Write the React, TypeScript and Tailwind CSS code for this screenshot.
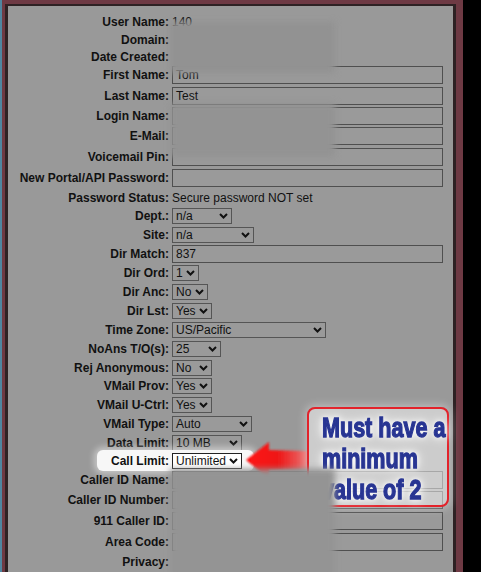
import React from "react";

type Row = {
  label: string;
  h: string;
  kind: "text" | "input" | "select";
  value?: string;
  w?: string;
  hl?: boolean;
};

const rows: Row[] = [
  { label: "User Name:", h: "h-[18px]", kind: "text", value: "140" },
  { label: "Domain:", h: "h-[17px]", kind: "text", value: "" },
  { label: "Date Created:", h: "h-[17px]", kind: "text", value: "" },
  { label: "First Name:", h: "h-[20px]", kind: "input", value: "Tom" },
  { label: "Last Name:", h: "h-[21px]", kind: "input", value: "Test" },
  { label: "Login Name:", h: "h-[20px]", kind: "input", value: "" },
  { label: "E-Mail:", h: "h-[20px]", kind: "input", value: "" },
  { label: "Voicemail Pin:", h: "h-[21px]", kind: "input", value: "" },
  { label: "New Portal/API Password:", h: "h-[21px]", kind: "input", value: "" },
  { label: "Password Status:", h: "h-[19px]", kind: "text", value: "Secure password NOT set" },
  { label: "Dept.:", h: "h-[18px]", kind: "select", value: "n/a", w: "w-[60px]" },
  { label: "Site:", h: "h-[19px]", kind: "select", value: "n/a", w: "w-[82px]" },
  { label: "Dir Match:", h: "h-[19px]", kind: "input", value: "837" },
  { label: "Dir Ord:", h: "h-[19px]", kind: "select", value: "1", w: "w-[27px]" },
  { label: "Dir Anc:", h: "h-[19px]", kind: "select", value: "No", w: "w-[36px]" },
  { label: "Dir Lst:", h: "h-[19px]", kind: "select", value: "Yes", w: "w-[40px]" },
  { label: "Time Zone:", h: "h-[19px]", kind: "select", value: "US/Pacific", w: "w-[154px]" },
  { label: "NoAns T/O(s):", h: "h-[19px]", kind: "select", value: "25", w: "w-[49px]" },
  { label: "Rej Anonymous:", h: "h-[19px]", kind: "select", value: "No", w: "w-[40px]" },
  { label: "VMail Prov:", h: "h-[18px]", kind: "select", value: "Yes", w: "w-[40px]" },
  { label: "VMail U-Ctrl:", h: "h-[19px]", kind: "select", value: "Yes", w: "w-[40px]" },
  { label: "VMail Type:", h: "h-[19px]", kind: "select", value: "Auto", w: "w-[80px]" },
  { label: "Data Limit:", h: "h-[19px]", kind: "select", value: "10 MB", w: "w-[70px]" },
  { label: "Call Limit:", h: "h-[18px]", kind: "select", value: "Unlimited", w: "w-[70px]", hl: true },
  { label: "Caller ID Name:", h: "h-[20px]", kind: "input", value: "" },
  { label: "Caller ID Number:", h: "h-[20px]", kind: "input", value: "" },
  { label: "911 Caller ID:", h: "h-[21px]", kind: "input", value: "" },
  { label: "Area Code:", h: "h-[21px]", kind: "input", value: "" },
  { label: "Privacy:", h: "h-[19px]", kind: "text", value: "" },
];

function Chevron() {
  return (
    <svg width="9" height="6" viewBox="0 0 9 6" className="shrink-0">
      <path d="M1 1 L4.5 4.5 L8 1" fill="none" stroke="#111" strokeWidth="2" />
    </svg>
  );
}

function Value({ r }: { r: Row }) {
  if (r.kind === "text") {
    return <span className="text-[#111]">{r.value}</span>;
  }
  if (r.kind === "input") {
    return (
      <div className="w-[271px] h-[18px] border border-[#4f4f4f] bg-[#9a9a9a] flex items-center pl-[3px] text-[#111]">
        {r.value}
      </div>
    );
  }
  return (
    <div
      className={`${r.w} h-[16px] border flex items-center justify-between pl-[3px] pr-[3px] text-[#111] ${
        r.hl ? "bg-white border-[#222]" : "bg-[#9a9a9a] border-[#555]"
      }`}
    >
      <span className="leading-none">{r.value}</span>
      <Chevron />
    </div>
  );
}

export default function App() {
  return (
    <div className="relative w-[481px] h-[572px] bg-black overflow-hidden [font-family:'Liberation_Sans',Arial,sans-serif] text-[12px]">
      {/* frame */}
      <div className="w-[463px] h-[572px] border-l-[2px] border-l-[#4f86a0] flex">
        <div className="flex-1 border-t-[4px] border-l-[3px] border-r-[7px] border-[#6e3a44] flex">
          <div className="flex-1 border-t-[2px] border-l-[3px] border-r-[3px] border-[#2e2224] bg-[#999999] pt-[7px]">
            {rows.map((r) => (
              <div key={r.label} className={`relative flex items-center ${r.h}`}>
                {r.hl && (
                  <div className="absolute left-[89px] top-[-2px] w-[157px] h-[21px] bg-[#f7f7f7] rounded-[6px] shadow-[0_0_6px_3px_rgba(255,255,255,0.45)]" />
                )}
                <div className="relative w-[161px] text-right font-bold text-[#111] whitespace-nowrap">
                  {r.label}
                </div>
                <div className="relative ml-[3px] flex items-center">
                  <Value r={r} />
                </div>
              </div>
            ))}
          </div>
        </div>
      </div>

      {/* blur patches */}
      <div className="absolute left-[170px] top-[22px] w-[165px] h-[51px] bg-[#929292] blur-[3px]" />
      <div className="absolute left-[170px] top-[103px] w-[165px] h-[54px] bg-[#939393] blur-[3px]" />

      {/* arrow */}
      <svg className="absolute left-[240px] top-[434px]" width="72" height="52" viewBox="0 0 72 52">
        <defs>
          <linearGradient id="ag" x1="0" y1="0" x2="1" y2="0">
            <stop offset="0" stopColor="#ff1010" />
            <stop offset="0.55" stopColor="#ee1a1a" />
            <stop offset="1" stopColor="#e87070" />
          </linearGradient>
          <filter id="fb">
            <feGaussianBlur stdDeviation="0.8" />
          </filter>
        </defs>
        <polygon
          points="6,26 29,8 29,16 67,17 67,35 29,36 29,45"
          fill="url(#ag)"
          filter="url(#fb)"
        />
      </svg>

      {/* callout */}
      <div className="absolute left-[307px] top-[407px] w-[142px] h-[100px] rounded-[8px] border-2 border-[#e3222a] bg-[rgba(255,255,255,0.5)] shadow-[0_0_8px_2px_rgba(255,255,255,0.35)] pl-[13px] pt-[3px]">
        <div className="origin-left scale-x-[0.77] whitespace-nowrap font-bold text-[28px] leading-[31px] text-[#283593] [-webkit-text-stroke:1.3px_#283593] [text-shadow:0_0_6px_#fff,0_0_10px_#fff,0_0_14px_#fff]">
          <div>Must have a</div>
          <div>minimum</div>
          <div>value of 2</div>
        </div>
      </div>

      <div className="absolute left-[170px] top-[469px] w-[165px] h-[110px] bg-[#949494] blur-[3px]" />
    </div>
  );
}
